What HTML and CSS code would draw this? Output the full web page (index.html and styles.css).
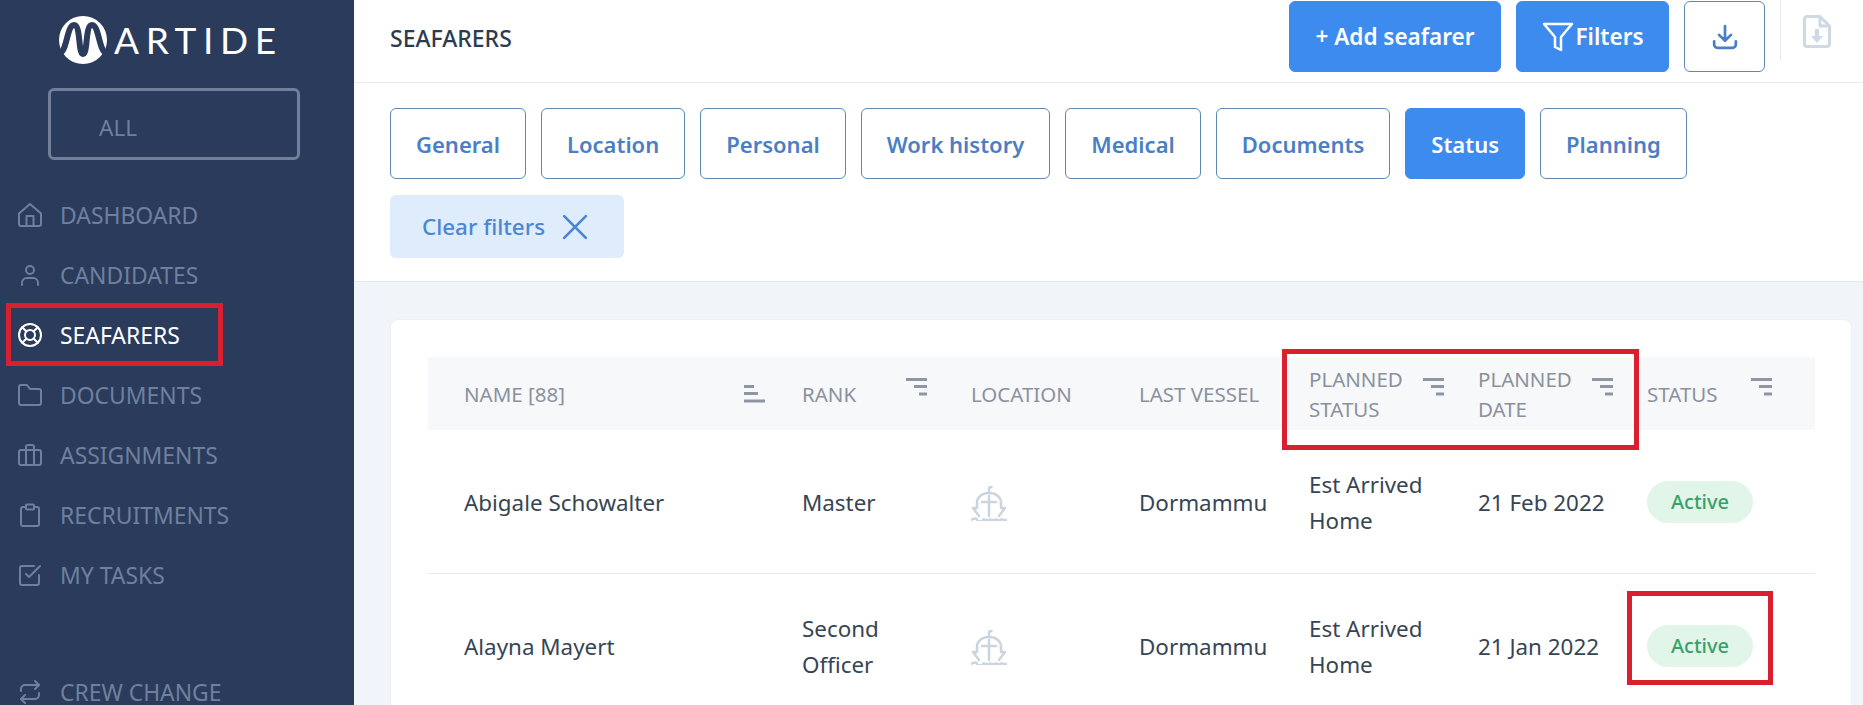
FILE: index.html
```html
<!DOCTYPE html>
<html lang="en">
<head>
<meta charset="utf-8">
<title>Martide - Seafarers</title>
<link rel="stylesheet" href="styles.css">
</head>
<body>
<div class="app">
  <aside class="sidebar">
    <div class="logo">
      <svg class="logo-mark" viewBox="0 0 48 48"><circle cx="24" cy="24" r="24" fill="#fff"/><path d="M1 37C8 35 8 9 15 9C22 9 19 38 24 38C29 38 26 9 33 9C40 9 40 35 47 37" fill="none" stroke="#2a3b5c" stroke-width="6"/></svg>
      <span class="logo-text">ARTIDE</span>
    </div>
    <div class="select-box">ALL</div>
    <nav class="nav">
      <a class="nav-item"><svg class="nav-icon" viewBox="0 0 24 24"><path d="M1 10.5 12 1l11 9.500V21a2 2 0 0 1-2 2H3a2 2 0 0 1-2-2z"/><path d="M8.500 23V13h7v10"/></svg>DASHBOARD</a>
      <a class="nav-item"><svg class="nav-icon" viewBox="0 0 24 24"><circle cx="12" cy="7" r="4"/><path d="M4 22v-2a5 5 0 0 1 5-5h6a5 5 0 0 1 5 5v2"/></svg>CANDIDATES</a>
      <a class="nav-item active"><svg class="nav-icon" viewBox="0 0 24 24"><circle cx="12" cy="12" r="11"/><circle cx="12" cy="12" r="5"/><path d="M4.200 4.200 8.500 8.500M15.500 15.500l4.300 4.300M19.800 4.200 15.500 8.500M8.500 15.500l-4.300 4.300"/></svg>SEAFARERS</a>
      <a class="nav-item"><svg class="nav-icon" viewBox="0 0 24 24"><path d="M23 20a2 2 0 0 1-2 2H3a2 2 0 0 1-2-2V4a2 2 0 0 1 2-2h6l3 4h9a2 2 0 0 1 2 2z"/></svg>DOCUMENTS</a>
      <a class="nav-item"><svg class="nav-icon" viewBox="0 0 24 24"><rect x="1" y="7" width="22" height="15" rx="2"/><path d="M16 22V4a2 2 0 0 0-2-2h-4a2 2 0 0 0-2 2v18"/></svg>ASSIGNMENTS</a>
      <a class="nav-item"><svg class="nav-icon" viewBox="0 0 24 24"><path d="M8 4H5a2 2 0 0 0-2 2v15a2 2 0 0 0 2 2h14a2 2 0 0 0 2-2V6a2 2 0 0 0-2-2h-3"/><rect x="8" y="1.500" width="8" height="5" rx="1"/></svg>RECRUITMENTS</a>
      <a class="nav-item"><svg class="nav-icon" viewBox="0 0 24 24"><path d="m8 11 3 3 11-11"/><path d="M21 12v8a2 2 0 0 1-2 2H4a2 2 0 0 1-2-2V5a2 2 0 0 1 2-2h12"/></svg>MY TASKS</a>
      <a class="nav-item nav-bottom"><svg class="nav-icon" viewBox="0 0 24 24"><path d="m17 1 4 4-4 4"/><path d="M3 11V9a4 4 0 0 1 4-4h14"/><path d="m7 23-4-4 4-4"/><path d="M21 13v2a4 4 0 0 1-4 4H3"/></svg>CREW CHANGE</a>
    </nav>
  </aside>

  <main class="main">
    <header class="topbar">
      <h1 class="title">SEAFARERS</h1>
      <div class="actions">
        <button class="btn btn-primary btn-add">+ Add seafarer</button>
        <button class="btn btn-primary btn-filters"><svg class="funnel" viewBox="0 0 32 30"><path d="M2 2h28L19 15v13l-6-3V15z"/></svg>Filters</button>
        <button class="btn btn-outline btn-download"><svg class="dl-icon" viewBox="0 0 24 24"><path d="M12 2v13M6.500 10l5.500 5.500 5.500-5.500M2 16v3a3 3 0 0 0 3 3h14a3 3 0 0 0 3-3v-3"/></svg></button>
        <span class="divider"></span>
        <svg class="file-icon" viewBox="0 0 28 33"><path class="file-line" d="M4 1.500h13L26.500 11v18a2.500 2.500 0 0 1-2.500 2.500H4A2.500 2.500 0 0 1 1.500 29V4A2.500 2.500 0 0 1 4 1.500z"/><path class="file-line" d="M17 1.500V11h9.500"/><path class="file-arrow" d="M12 14h4v7h4l-6 7-6-7h4z"/></svg>
      </div>
    </header>

    <section class="filters">
      <button class="btn btn-outline tab">General</button>
      <button class="btn btn-outline tab">Location</button>
      <button class="btn btn-outline tab">Personal</button>
      <button class="btn btn-outline tab">Work history</button>
      <button class="btn btn-outline tab">Medical</button>
      <button class="btn btn-outline tab">Documents</button>
      <button class="btn btn-primary tab">Status</button>
      <button class="btn btn-outline tab">Planning</button>
      <button class="btn clear">Clear filters<svg class="clear-x" viewBox="0 0 24 24"><path d="M2 2l20 20M22 2 2 22"/></svg></button>
    </section>

    <section class="card">
      <div class="row head">
        <div class="cell cell-name">NAME [88]<svg class="sort sort-low" viewBox="0 0 21 18"><path d="M0 1.500h10M0 8.500h14M0 16h21"/></svg></div>
        <div class="cell cell-rank">RANK<svg class="sort" viewBox="0 0 21 18"><path d="M0 1.500h21M8 8.500h13M13 16h8"/></svg></div>
        <div class="cell">LOCATION</div>
        <div class="cell">LAST VESSEL</div>
        <div class="cell cell-planned"><span>PLANNED<br>STATUS</span><svg class="sort" viewBox="0 0 21 18"><path d="M0 1.500h21M8 8.500h13M13 16h8"/></svg></div>
        <div class="cell cell-planned"><span>PLANNED<br>DATE</span><svg class="sort" viewBox="0 0 21 18"><path d="M0 1.500h21M8 8.500h13M13 16h8"/></svg></div>
        <div class="cell cell-status">STATUS<svg class="sort" viewBox="0 0 21 18"><path d="M0 1.500h21M8 8.500h13M13 16h8"/></svg></div>
      </div>
      <div class="row body">
        <div class="cell">Abigale Schowalter</div>
        <div class="cell">Master</div>
        <div class="cell"><svg class="ship" viewBox="0 0 36 36"><path d="M18 8V4c0-1.500 1-2 2.500-2"/><path d="M8 31 2 23h4v-5C6 12 11 8 18 8s12 4 12 10v5h4l-6 8"/><path d="M18 11v20M11 17h14"/><path d="M0 35c3-2 6-2 6 0s6 2 6 0 6 2 6 0 6 2 6 0 6 2 6 0 3 1 6 0"/></svg></div>
        <div class="cell">Dormammu</div>
        <div class="cell">Est Arrived<br>Home</div>
        <div class="cell">21 Feb 2022</div>
        <div class="cell"><span class="pill">Active</span></div>
      </div>
      <div class="row body">
        <div class="cell">Alayna Mayert</div>
        <div class="cell">Second<br>Officer</div>
        <div class="cell"><svg class="ship" viewBox="0 0 36 36"><path d="M18 8V4c0-1.500 1-2 2.500-2"/><path d="M8 31 2 23h4v-5C6 12 11 8 18 8s12 4 12 10v5h4l-6 8"/><path d="M18 11v20M11 17h14"/><path d="M0 35c3-2 6-2 6 0s6 2 6 0 6 2 6 0 6 2 6 0 6 2 6 0 3 1 6 0"/></svg></div>
        <div class="cell">Dormammu</div>
        <div class="cell">Est Arrived<br>Home</div>
        <div class="cell">21 Jan 2022</div>
        <div class="cell"><span class="pill">Active</span></div>
      </div>
    </section>
  </main>

  <div class="mark mark-nav"></div>
  <div class="mark mark-head"></div>
  <div class="mark mark-pill"></div>
</div>
</body>
</html>
```

FILE: styles.css
```css
* { box-sizing: border-box; }
html, body { margin: 0; height: 705px; overflow: hidden; }
body { font-family: "Noto Sans", "Open Sans", sans-serif; color: #364554; background: #f1f5f9; }

.app { position: relative; display: flex; height: 705px; overflow: hidden; }

/* Sidebar */
.sidebar { flex: 0 0 354px; background: #2a3b5c; padding-top: 16px; color: #6f809c; overflow: hidden; }
.logo { display: flex; align-items: center; gap: 7px; padding-left: 59px; height: 48px; }
.logo-mark { flex: none; width: 48px; height: 48px; }
.logo-text { font-family: Lato, sans-serif; font-weight: 400; font-size: 37px; line-height: 48px; letter-spacing: 6.600px; color: #fff; }
.select-box { margin: 24px 0 0 48px; width: 252px; height: 72px; border: 3px solid #717f98; border-radius: 6px; padding-left: 48px; font-size: 22.500px; line-height: 74px; color: #6f809c; }
.nav { display: flex; flex-direction: column; margin-top: 25px; }
.nav-item { display: flex; align-items: center; gap: 18px; height: 60px; padding-left: 18px; font-size: 22.900px; color: #6f809c; }
.nav-item.active { color: #fff; }
.nav-bottom { margin-top: 57px; }
.nav-icon { flex: none; width: 24px; height: 24px; fill: none; stroke: currentColor; stroke-width: 2; stroke-linecap: round; stroke-linejoin: round; }

/* Main */
.main { flex: 1; min-width: 0; background: #f1f5f9; }
.topbar { display: flex; justify-content: space-between; height: 83px; padding: 1px 0 0 36px; background: #fff; border-bottom: 1px solid #e8ebef; }
.title { margin: 0; font-size: 23px; font-weight: 500; line-height: 74px; color: #2d3b50; }
.actions { display: flex; align-items: flex-start; gap: 15px; }

.btn { display: inline-flex; align-items: center; justify-content: center; height: 71px; border-radius: 6px; font-family: inherit; font-size: 22.500px; font-weight: 600; border: 1px solid transparent; padding: 0; }
.btn-primary { background: #3d8bef; border-color: #3d8bef; color: #fff; }
.btn-outline { background: #fff; border-color: #5f88b0; color: #4a7fc4; }
.btn-add { width: 212px; }
.btn-filters { width: 153px; gap: 2px; }
.funnel { width: 32px; height: 30px; fill: none; stroke: #fff; stroke-width: 2.500; stroke-linejoin: round; }
.btn-download { width: 81px; }
.dl-icon { width: 26px; height: 26px; fill: none; stroke: #4a7fc4; stroke-width: 2.500; stroke-linecap: round; stroke-linejoin: round; }
.divider { width: 1px; height: 60px; margin-top: -1px; background: #e5e8ec; }
.file-icon { width: 28px; height: 33px; margin: 14px 32px 0 7px; }
.file-line { fill: none; stroke: #cfd9e5; stroke-width: 3; stroke-linejoin: round; }
.file-arrow { fill: #cfd9e5; }

.filters { display: flex; flex-wrap: wrap; align-content: flex-start; gap: 16px 15px; height: 199px; padding: 25px 36px 0; background: #fff; border-bottom: 1px solid #e5e8ec; }
.tab { padding: 0 25px; font-size: 22px; }
.clear { height: 63px; padding: 0 36px 0 32px; gap: 17px; background: #dfecfb; border: 0; color: #4a86d4; font-size: 22.400px; font-weight: 500; }
.clear-x { width: 26px; height: 26px; fill: none; stroke: #4a86d4; stroke-width: 2.500; stroke-linecap: round; }

/* Table card */
.card { margin: 37px 11px 0 36px; padding: 37px 36px 36px 37px; background: #fff; border: 1px solid #eceff3; border-radius: 8px; }
.row { display: grid; grid-template-columns: 338px 169px 168px 170px 169px 169px 1fr; padding-left: 36px; }
.cell { display: flex; align-items: center; min-width: 0; }
.head { height: 73px; background: #f7f8fa; font-size: 20.500px; line-height: 30px; color: #8a919e; }
.body { height: 144px; font-size: 22.400px; line-height: 36px; border-bottom: 1px solid #e8ebef; }
.body .cell { display: block; align-self: center; padding-top: 2px; }
.body .cell:last-child { padding-top: 0; }
.sort { flex: none; width: 21px; height: 18px; margin-bottom: 14px; margin-left: auto; fill: none; stroke: #8f96a3; stroke-width: 3; }
.sort-low { margin-bottom: 0; }
.cell-name { padding-right: 37px; }
.cell-rank { padding-right: 44px; }
.cell-planned { padding-right: 34px; }
.cell-status { padding-right: 43px; }
.ship { display: block; width: 36px; height: 36px; fill: none; stroke: #cbd5e0; stroke-width: 2.500; stroke-linecap: round; stroke-linejoin: round; }
.pill { display: inline-block; width: 106px; height: 42px; border-radius: 21px; background: #e1f5e9; color: #38a169; font-size: 20px; font-weight: 500; line-height: 42px; text-align: center; }

/* Red annotation boxes drawn over the screenshot */
.mark { position: absolute; border: 5px solid #d9202f; pointer-events: none; }
.mark-nav { left: 6px; top: 303px; width: 217px; height: 63px; }
.mark-head { left: 1282px; top: 349px; width: 357px; height: 101px; }
.mark-pill { left: 1627px; top: 591px; width: 146px; height: 94px; }
```
